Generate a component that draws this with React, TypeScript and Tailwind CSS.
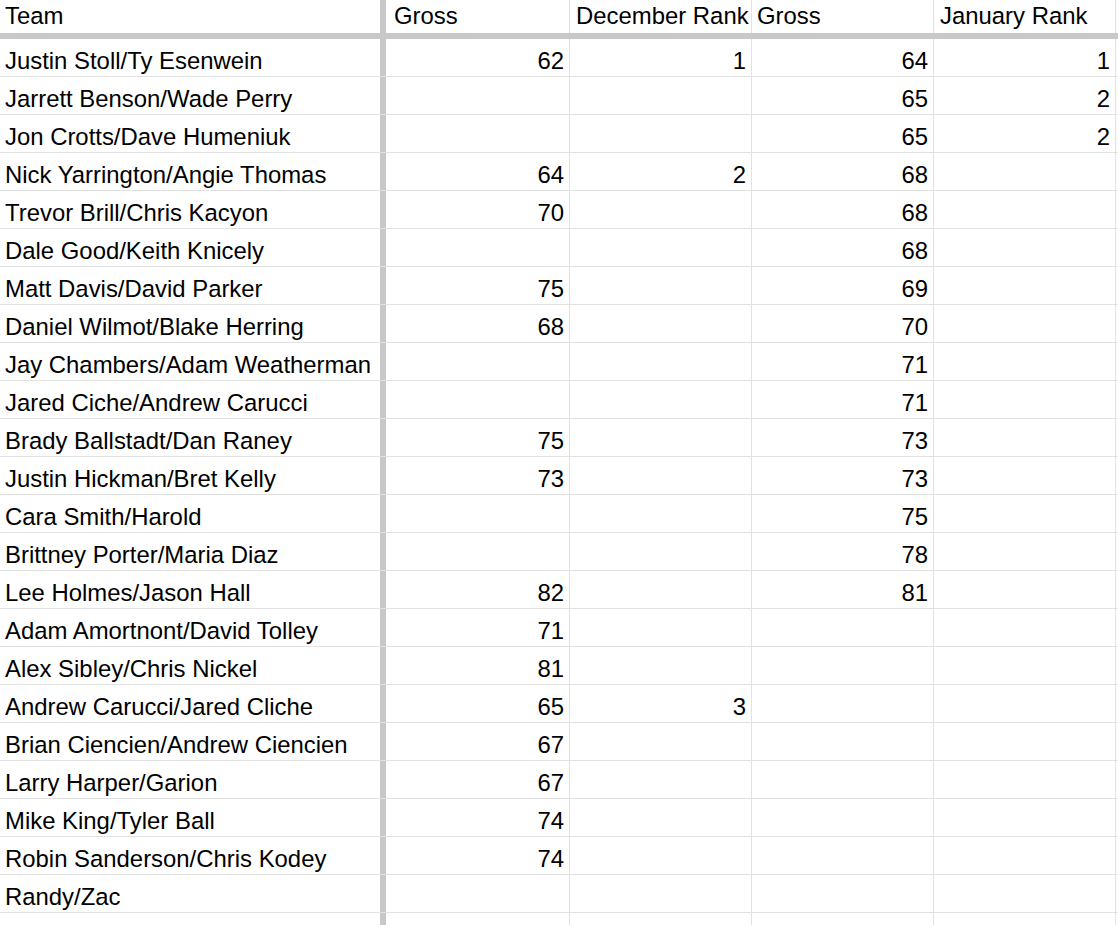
type Row = [string, string, string, string, string];

const rows: Row[] = [
  ["Justin Stoll/Ty Esenwein", "62", "1", "64", "1"],
  ["Jarrett Benson/Wade Perry", "", "", "65", "2"],
  ["Jon Crotts/Dave Humeniuk", "", "", "65", "2"],
  ["Nick Yarrington/Angie Thomas", "64", "2", "68", ""],
  ["Trevor Brill/Chris Kacyon", "70", "", "68", ""],
  ["Dale Good/Keith Knicely", "", "", "68", ""],
  ["Matt Davis/David Parker", "75", "", "69", ""],
  ["Daniel Wilmot/Blake Herring", "68", "", "70", ""],
  ["Jay Chambers/Adam Weatherman", "", "", "71", ""],
  ["Jared Ciche/Andrew Carucci", "", "", "71", ""],
  ["Brady Ballstadt/Dan Raney", "75", "", "73", ""],
  ["Justin Hickman/Bret Kelly", "73", "", "73", ""],
  ["Cara Smith/Harold", "", "", "75", ""],
  ["Brittney Porter/Maria Diaz", "", "", "78", ""],
  ["Lee Holmes/Jason Hall", "82", "", "81", ""],
  ["Adam Amortnont/David Tolley", "71", "", "", ""],
  ["Alex Sibley/Chris Nickel", "81", "", "", ""],
  ["Andrew Carucci/Jared Cliche", "65", "3", "", ""],
  ["Brian Ciencien/Andrew Ciencien", "67", "", "", ""],
  ["Larry Harper/Garion", "67", "", "", ""],
  ["Mike King/Tyler Ball", "74", "", "", ""],
  ["Robin Sanderson/Chris Kodey", "74", "", "", ""],
  ["Randy/Zac", "", "", "", ""],
  ["", "", "", "", ""],
];

const team = "w-[386px] shrink-0 border-r-[6px] border-[#c8c8c8] pl-[5px]";
const num = "shrink-0 border-r border-[#e2e2e2] justify-end pr-[5px]";
const widths = ["w-[184px]", "w-[182px]", "w-[182px]", "w-[182px]"];

function Cell({ className, children }: { className: string; children?: string }) {
  return <div className={`flex h-full items-end whitespace-nowrap ${className}`}>{children}</div>;
}

export default function App() {
  return (
    <div
      className="h-[925px] w-[1118px] overflow-hidden bg-white text-[23.9px] leading-[1.15] text-black"
      style={{ fontFamily: '"Liberation Sans", Arial, sans-serif' }}
    >
      <div className="flex h-[39px] border-b-[6px] border-[#c8c8c8]">
        <Cell className={`${team} pb-[4px]`}>Team</Cell>
        <Cell className="w-[184px] shrink-0 border-r border-[#e2e2e2] pb-[4px] pl-[8px]">Gross</Cell>
        <Cell className="w-[182px] shrink-0 border-r border-[#e2e2e2] pb-[4px] pl-[6px]">December Rank</Cell>
        <Cell className="w-[182px] shrink-0 border-r border-[#e2e2e2] pb-[4px] pl-[5px]">Gross</Cell>
        <Cell className="w-[182px] shrink-0 border-r border-[#e2e2e2] pb-[4px] pl-[6px]">January Rank</Cell>
        <div className="flex-1" />
      </div>
      {rows.map((r, i) => (
        <div key={i} className="flex h-[38px] border-b border-[#e2e2e2]">
          <Cell className={`${team} pb-[2px]`}>{r[0]}</Cell>
          {r.slice(1).map((v, j) => (
            <Cell key={j} className={`${widths[j]} ${num} pb-[2px]`}>
              {v}
            </Cell>
          ))}
          <div className="flex-1" />
        </div>
      ))}
    </div>
  );
}
